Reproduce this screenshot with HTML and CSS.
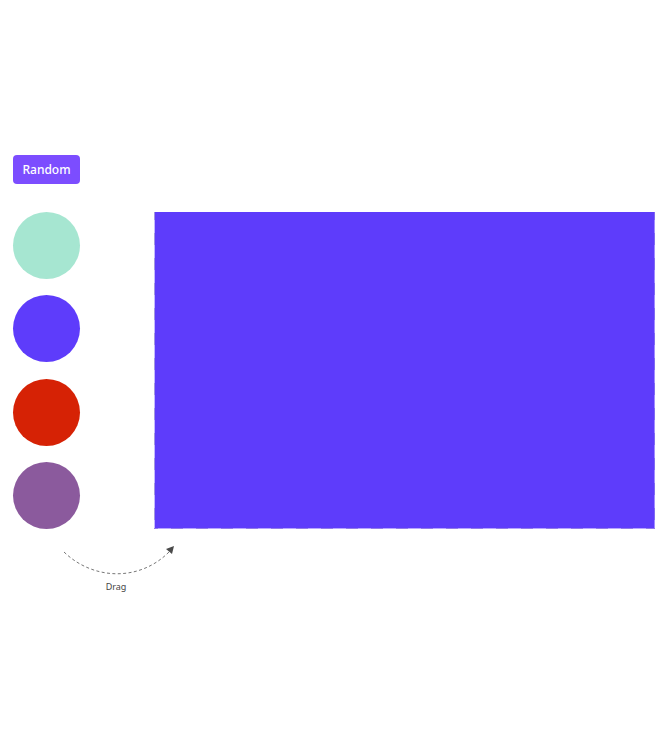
FILE: index.html
```html
<!DOCTYPE html>
<html lang="en">
<head>
<meta charset="utf-8">
<meta name="viewport" content="width=device-width, initial-scale=1">
<title>Random colors</title>
<link rel="stylesheet" href="styles.css">
</head>
<body>
<main class="picker">
  <button class="random" type="button">Random</button>
  <div class="board">
    <div class="swatches">
      <div class="swatch mint" draggable="true"></div>
      <div class="swatch violet" draggable="true"></div>
      <div class="swatch red" draggable="true"></div>
      <div class="swatch plum" draggable="true"></div>
    </div>
    <div class="dropzone"></div>
  </div>
  <figure class="hint">
    <svg class="arrow" width="112" height="30" viewBox="0 0 112 30" aria-hidden="true">
      <path d="M1 6C30 34 76 36 106 6" fill="none" stroke="#777" stroke-width="1" stroke-dasharray="3 2.4"/>
      <path d="M111 0L103 3L109 8Z" fill="#4a4a4a"/>
    </svg>
    <figcaption>Drag</figcaption>
  </figure>
</main>
</body>
</html>
```
FILE: styles.css
```css
* {
  box-sizing: border-box;
}

body {
  margin: 0;
  min-height: 100vh;
  display: flex;
  align-items: center;
  background: #fff;
  color: #444;
  font-family: "Noto Sans", sans-serif;
}

.picker {
  flex: 1;
  padding: 2px 16px 0 13px;
}

.random {
  display: block;
  width: 67px;
  height: 29px;
  margin: 0 0 28px;
  padding: 0;
  border: 0;
  border-radius: 4px;
  background: #7c4dff;
  color: #fff;
  font: 500 12px/28px "Noto Sans", sans-serif;
}

.board {
  display: flex;
  gap: 74px;
  min-height: 317px;
}

.swatches {
  display: grid;
  align-content: space-between;
}

.swatch {
  width: 67px;
  height: 67px;
  border-radius: 50%;
}

.mint {
  background: #a6e6d1;
}

.violet {
  background: #5e3cfb;
}

.red {
  background: #d62205;
}

.plum {
  background: #8b5a9d;
}

/* Dashed outline on the sides and the bottom */
.dropzone {
  flex: 1;
  padding: 0 1px 1px;
  background:
    linear-gradient(#5e3cfb, #5e3cfb) content-box,
    repeating-linear-gradient(90deg, #917be8 0 4px, #b8a7ff 4px 17px, #917be8 17px 25px) bottom / 100% 1px no-repeat,
    repeating-linear-gradient(#a397e0 0 8px, #c5baff 8px 21px, #a397e0 21px 25px) left / 1px 100% no-repeat,
    repeating-linear-gradient(#8069f0 0 8px, #a18bff 8px 21px, #8069f0 21px 25px) right / 1px 100% no-repeat;
  background-clip: content-box, border-box, border-box, border-box;
}

.hint {
  width: 112px;
  margin: 17px 0 0 50px;
  text-align: center;
}

.arrow {
  display: block;
}

figcaption {
  margin-top: 4px;
  padding-right: 6px;
  font-size: 9px;
  line-height: 14px;
}
```
